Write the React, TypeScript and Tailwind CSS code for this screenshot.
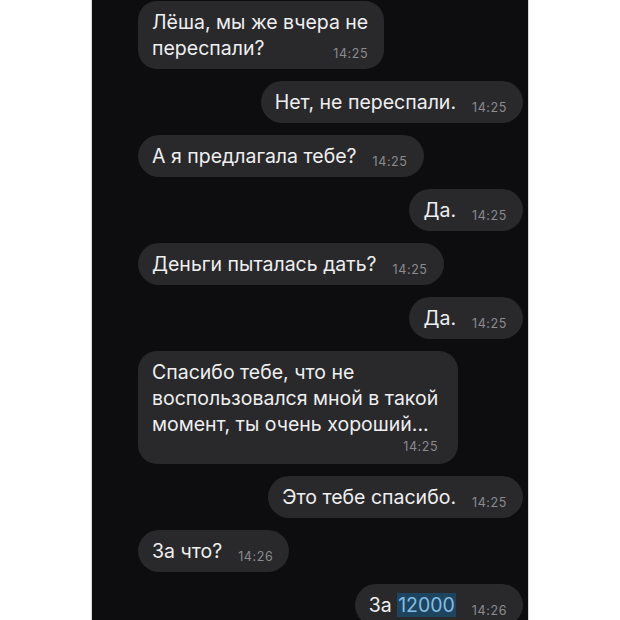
import React from "react";

type Msg = {
  out: boolean;
  lines: React.ReactNode[];
  time: string;
  // time sits on its own row under the text
  timeBelow?: boolean;
};

const messages: Msg[] = [
  { out: false, lines: ["Лёша, мы же вчера не", "переспали?"], time: "14:25" },
  { out: true, lines: ["Нет, не переспали."], time: "14:25" },
  { out: false, lines: ["А я предлагала тебе?"], time: "14:25" },
  { out: true, lines: ["Да."], time: "14:25" },
  { out: false, lines: ["Деньги пыталась дать?"], time: "14:25" },
  { out: true, lines: ["Да."], time: "14:25" },
  {
    out: false,
    lines: [
      "Спасибо тебе, что не",
      "воспользовался мной в такой",
      "момент, ты очень хороший...",
    ],
    time: "14:25",
    timeBelow: true,
  },
  { out: true, lines: ["Это тебе спасибо."], time: "14:25" },
  { out: false, lines: ["За что?"], time: "14:26" },
  {
    out: true,
    lines: [
      <>
        За{" "}
        <span className="bg-[#1d4560] text-[#86bde0] px-[1px]">12000</span>
      </>,
    ],
    time: "14:26",
  },
];

function Time({ t }: { t: string }) {
  return (
    <span className="text-[12.5px] leading-none tracking-[0.6px] text-[#8b8b90] shrink-0">
      {t}
    </span>
  );
}

function Bubble({ m }: { m: Msg }) {
  const last = m.lines.length - 1;
  return (
    <div
      className={`bg-[#29292b] text-[#efeff0] text-[19.5px] leading-[26px] py-[8px] ${
        m.timeBelow ? "pl-[14px] pr-[20px]" : "pl-[14px] pr-[16px]"
      } ${m.lines.length > 1 ? "rounded-[19px]" : "rounded-full"} ${
        m.out ? "self-end" : "self-start"
      }`}
    >
      {m.lines.map((line, i) =>
        i === last && !m.timeBelow ? (
          <div key={i} className="flex items-baseline justify-between gap-4">
            <span className="whitespace-nowrap">{line}</span>
            <span className="translate-y-[3px]">
              <Time t={m.time} />
            </span>
          </div>
        ) : (
          <div key={i} className="whitespace-nowrap">
            {line}
          </div>
        )
      )}
      {m.timeBelow && (
        <div className="flex justify-end pt-[4px] pb-[2px] leading-[12px]">
          <Time t={m.time} />
        </div>
      )}
    </div>
  );
}

export default function App() {
  return (
    <div
      className="w-[620px] h-[620px] bg-white flex justify-center"
      style={{ fontFamily: "Inter, 'Liberation Sans', sans-serif" }}
    >
      <div className="w-[438px] h-full bg-[#0d0d10] overflow-hidden flex flex-col gap-3 pt-[1px] pl-[46px] pr-[5px] border-x border-[#d8d8d8]">
        {messages.map((m, i) => (
          <Bubble key={i} m={m} />
        ))}
      </div>
    </div>
  );
}
